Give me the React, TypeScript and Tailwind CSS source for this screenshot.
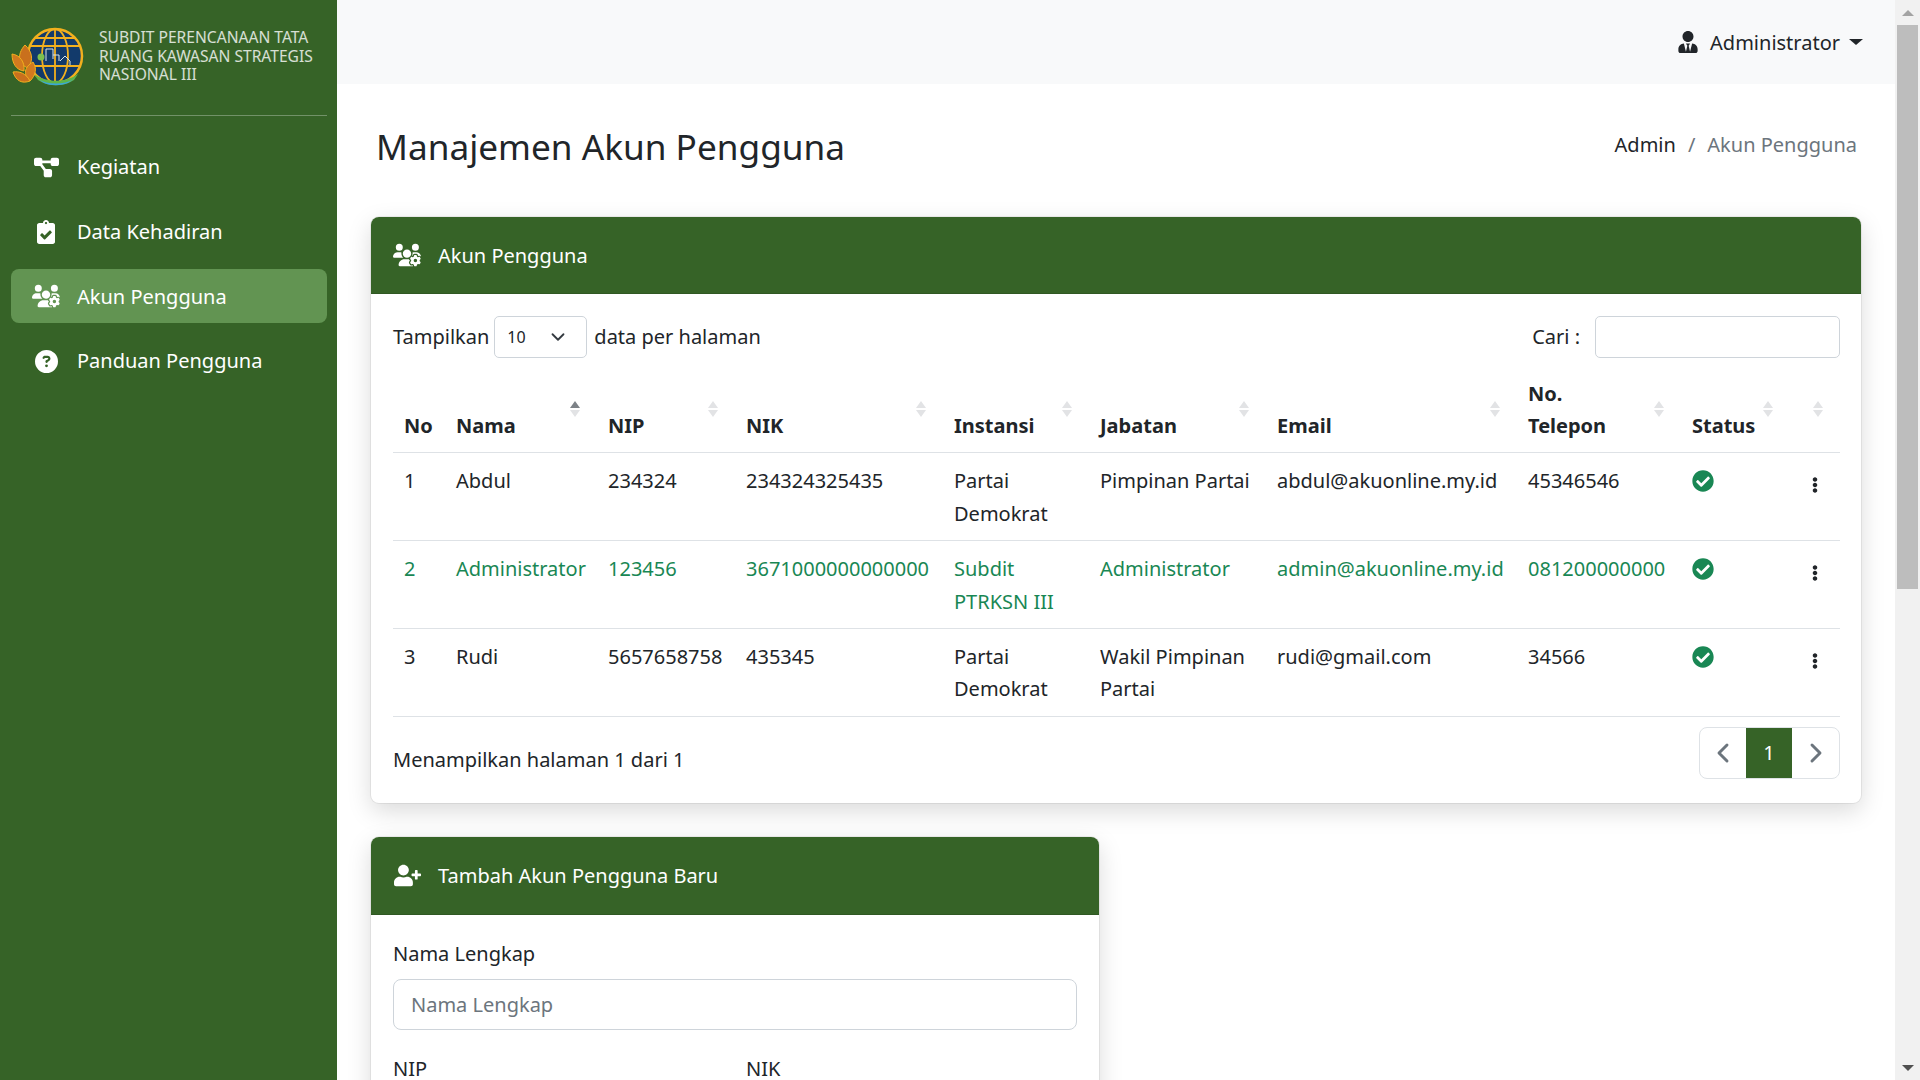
import { FaClipboardCheck, FaUserPlus, FaUserTie, FaCheckCircle, FaEllipsisV } from "react-icons/fa";
import { FaDiagramProject, FaUsersGear, FaCircleQuestion } from "react-icons/fa6";
import { ChevronDown, ChevronLeft, ChevronRight } from "lucide-react";

const menu = [
  { label: "Kegiatan", icon: <FaDiagramProject size={25} /> },
  { label: "Data Kehadiran", icon: <FaClipboardCheck size={24} /> },
  { label: "Akun Pengguna", icon: <FaUsersGear size={28} />, active: true },
  { label: "Panduan Pengguna", icon: <FaCircleQuestion size={23} /> },
];

const columns = [
  { label: "No", width: "w-[52px]" },
  { label: "Nama", width: "w-[152px]", sorted: true },
  { label: "NIP", width: "w-[138px]", sort: true },
  { label: "NIK", width: "w-[208px]", sort: true },
  { label: "Instansi", width: "w-[146px]", sort: true },
  { label: "Jabatan", width: "w-[177px]", sort: true },
  { label: "Email", width: "w-[251px]", sort: true },
  { label: "No. Telepon", width: "w-[164px]", sort: true, wrap: true },
  { label: "Status", width: "w-[109px]", sort: true },
  { label: "", width: "w-[50px]", sort: true },
];

const rows = [
  ["1", "Abdul", "234324", "234324325435", "Partai Demokrat", "Pimpinan Partai", "abdul@akuonline.my.id", "45346546"],
  ["2", "Administrator", "123456", "3671000000000000", "Subdit PTRKSN III", "Administrator", "admin@akuonline.my.id", "081200000000"],
  ["3", "Rudi", "5657658758", "435345", "Partai Demokrat", "Wakil Pimpinan Partai", "rudi@gmail.com", "34566"],
];

function Logo() {
  return (
    <svg viewBox="0 0 80 66" className="w-[80px] h-[66px] shrink-0">
      <circle cx="44" cy="33" r="27" fill="#123a6b" stroke="#f2b01e" strokeWidth="2.5" />
      <g fill="none" stroke="#f2b01e" strokeWidth="1.8">
        <ellipse cx="44" cy="33" rx="13" ry="27" />
        <path d="M44 6v54M18 23h52M18 43h52M23 15h42" />
      </g>
      <path d="M23 51c12 9 32 9 44 0l-4 6c-10 7-26 7-36 0z" fill="#5fb548" />
      <path d="M27 56c10 6 26 6 36 0l-6 4c-8 3-17 3-24 0z" fill="#3aa6d8" />
      <g fill="none" stroke="#d8e4ea" strokeWidth="1">
        <path d="M35 38V26h7v10M42 32h6v6M49 38l5-5 5 5v4" />
      </g>
      <circle cx="30" cy="34" r="3.5" fill="#7cc04f" />
      <path d="M14 22c7 6 9 15 3 23C8 42 5 32 14 22z" fill="#c9701d" stroke="#f2b01e" strokeWidth="1" />
      <path d="M1 31c8 1 13 8 12 17C5 47 1 40 1 31z" fill="#d27a1f" stroke="#f2b01e" strokeWidth="1" />
      <path d="M22 39c4 6 3 13-3 19-7-6-6-14 3-19z" fill="#d27a1f" stroke="#f2b01e" strokeWidth="1" />
      <path d="M2 49c6-1 13 1 17 9-8 3-14 0-17-9z" fill="#c9701d" stroke="#f2b01e" strokeWidth="1" />
    </svg>
  );
}

function SortArrows({ active }: { active?: boolean }) {
  return (
    <span className="absolute right-[17px] top-[34px] flex flex-col gap-[2px]">
      <span className={`w-0 h-0 border-x-[5px] border-x-transparent border-b-[7px] ${active ? "border-b-[#7d8287]" : "border-b-[#e2e3e5]"}`} />
      <span className="w-0 h-0 border-x-[5px] border-x-transparent border-t-[7px] border-t-[#e2e3e5]" />
    </span>
  );
}

export default function App() {
  return (
    <div className="flex h-screen w-full overflow-hidden bg-white text-[#212529] text-[20px] leading-[32.4px] font-['Noto_Sans',sans-serif]">
      {/* SIDEBAR */}
      <aside className="w-[337px] shrink-0 bg-[#366327] pl-[11px] pr-[10px] text-white">
        <div className="flex items-center h-[116px] border-b border-white/30 pb-[3px] gap-[8px]">
          <Logo />
          <div className="text-[15.6px] leading-[18.4px] text-white/80 whitespace-nowrap">
            SUBDIT PERENCANAAN TATA<br />RUANG KAWASAN STRATEGIS<br />NASIONAL III
          </div>
        </div>
        <nav className="mt-[24px] flex flex-col gap-[10.7px]">
          {menu.map((item) => (
            <div key={item.label} className={`flex items-center h-[54px] rounded-[8px] ${item.active ? "bg-[#629452]" : ""}`}>
              <span className="w-[66px] shrink-0 flex justify-center pl-[4px]">{item.icon}</span>
              <span className="pt-[1px]">{item.label}</span>
            </div>
          ))}
        </nav>
      </aside>

      {/* MAIN */}
      <main className="flex-1 min-w-0 flex flex-col overflow-hidden">
        <header className="h-[84px] shrink-0 bg-[#f8f9fa] flex items-center justify-end gap-[11px] pr-[32px]">
          <FaUserTie size={22} />
          <span className="pt-[2px]">Administrator</span>
          <span className="ml-[-2px] w-0 h-0 border-x-[7px] border-x-transparent border-t-[6px] border-t-[#212529]" />
        </header>

        <div className="flex items-center justify-between pl-[39px] pr-[38px] h-[133px] shrink-0 pb-[10px]">
          <h1 className="text-[35.2px] leading-[46px]">Manajemen Akun Pengguna</h1>
          <div className="flex gap-[12px]">
            <span>Admin</span>
            <span className="text-[#6c757d]">/</span>
            <span className="text-[#6c757d]">Akun Pengguna</span>
          </div>
        </div>

        <div className="pl-[34px] pr-[34px] flex flex-col gap-[34px]">
          {/* DAFTAR AKUN */}
          <section className="rounded-[8px] shadow-[0_0_0_1px_rgba(0,0,0,0.06),0_8px_24px_rgba(0,0,0,0.15)] bg-white overflow-hidden">
            <div className="h-[77px] bg-[#366327] border-b border-black/10 text-white flex items-center gap-[17px] px-[22px]">
              <span className="w-[28px] flex justify-center"><FaUsersGear size={28} /></span>
              <span className="pt-[2px]">Akun Pengguna</span>
            </div>
            <div className="pl-[22px] pr-[21px] pt-[22px] pb-[24px]">
              <div className="flex items-center justify-between h-[42px]">
                <div className="flex items-center gap-[5px]">
                  <span>Tampilkan</span>
                  <div className="w-[93px] h-[42px] border border-[#ced4da] rounded-[5px] flex items-center justify-between pl-[12px] pr-[17px] text-[16px]">
                    <span>10</span>
                    <ChevronDown size={22} strokeWidth={2} className="text-[#343a40]" />
                  </div>
                  <span className="ml-[2px]">data per halaman</span>
                </div>
                <div className="flex items-center gap-[15px]">
                  <span>Cari :</span>
                  <input className="w-[245px] h-[42px] border border-[#ced4da] rounded-[5px] bg-white" />
                </div>
              </div>

              <table className="table-fixed w-full mt-[9px] border-collapse">
                <thead>
                  <tr className="border-b border-[#dee2e6]">
                    {columns.map((col) => (
                      <th key={col.label || "aksi"} className={`${col.width} relative pt-[11px] px-[11px] pb-[9.6px] align-bottom text-left font-bold`}>
                        {col.wrap ? <span className="block w-[80px]">{col.label}</span> : col.label}
                        {(col.sort || col.sorted) && <SortArrows active={col.sorted} />}
                      </th>
                    ))}
                  </tr>
                </thead>
                <tbody>
                  {rows.map((row) => (
                    <tr key={row[0]} className={`border-b border-[#dee2e6] ${row[0] === "2" ? "text-[#198754]" : ""}`}>
                      {row.map((cell, i) => (
                        <td key={i} className="px-[11px] pt-[12px] pb-[10px] align-top">{cell}</td>
                      ))}
                      <td className="px-[11px] pt-[12px] pb-[10px] align-top">
                        <FaCheckCircle size={22} className="text-[#198754] mt-[5px]" />
                      </td>
                      <td className="pl-[17px] pt-[12px] pb-[10px] align-top text-[#212529]">
                        <FaEllipsisV size={16} className="mt-[12px]" />
                      </td>
                    </tr>
                  ))}
                </tbody>
              </table>

              <div className="flex items-center justify-between mt-[10px]">
                <span className="mt-[14px]">Menampilkan halaman 1 dari 1</span>
                <div className="flex h-[52px] w-[141px] rounded-[8px] border border-[#dee2e6] overflow-hidden">
                  <span className="w-[46px] flex items-center justify-center text-[#6c757d]"><ChevronLeft size={32} strokeWidth={2.2} /></span>
                  <span className="w-[46px] bg-[#366327] text-white flex items-center justify-center">1</span>
                  <span className="flex-1 flex items-center justify-center text-[#6c757d]"><ChevronRight size={32} strokeWidth={2.2} /></span>
                </div>
              </div>
            </div>
          </section>

          {/* TAMBAH AKUN */}
          <section className="w-[728px] rounded-[8px] shadow-[0_0_0_1px_rgba(0,0,0,0.06),0_8px_24px_rgba(0,0,0,0.15)] bg-white overflow-hidden shrink-0">
            <div className="h-[78px] bg-[#366327] border-b border-black/10 text-white flex items-center gap-[17px] px-[22px]">
              <span className="w-[28px] flex justify-center"><FaUserPlus size={27} /></span>
              <span className="pt-[2px]">Tambah Akun Pengguna Baru</span>
            </div>
            <div className="px-[22px] pt-[23px] pb-[24px]">
              <label className="block">Nama Lengkap</label>
              <input placeholder="Nama Lengkap" className="mt-[9px] w-full h-[51px] border border-[#ced4da] rounded-[8px] px-[17px] placeholder:text-[#6c757d]" />
              <div className="grid grid-cols-2 gap-x-[22px] mt-[23px]">
                <label>NIP</label>
                <label>NIK</label>
                <input placeholder="NIP" className="mt-[9px] w-full h-[51px] border border-[#ced4da] rounded-[8px] px-[17px] placeholder:text-[#6c757d]" />
                <input placeholder="NIK" className="mt-[9px] w-full h-[51px] border border-[#ced4da] rounded-[8px] px-[17px] placeholder:text-[#6c757d]" />
              </div>
            </div>
          </section>
        </div>
      </main>

      {/* SCROLLBAR */}
      <div className="w-[25px] shrink-0 bg-[#f1f1f1] flex flex-col items-center">
        <div className="h-[25px] shrink-0 flex items-center justify-center">
          <span className="w-0 h-0 border-x-[6px] border-x-transparent border-b-[6px] border-b-[#a3a3a3]" />
        </div>
        <div className="w-[21px] h-[564px] bg-[#bdbdbd]" />
        <div className="flex-1" />
        <div className="h-[25px] shrink-0 flex items-center justify-center">
          <span className="w-0 h-0 border-x-[6px] border-x-transparent border-t-[6px] border-t-[#505050]" />
        </div>
      </div>
    </div>
  );
}
